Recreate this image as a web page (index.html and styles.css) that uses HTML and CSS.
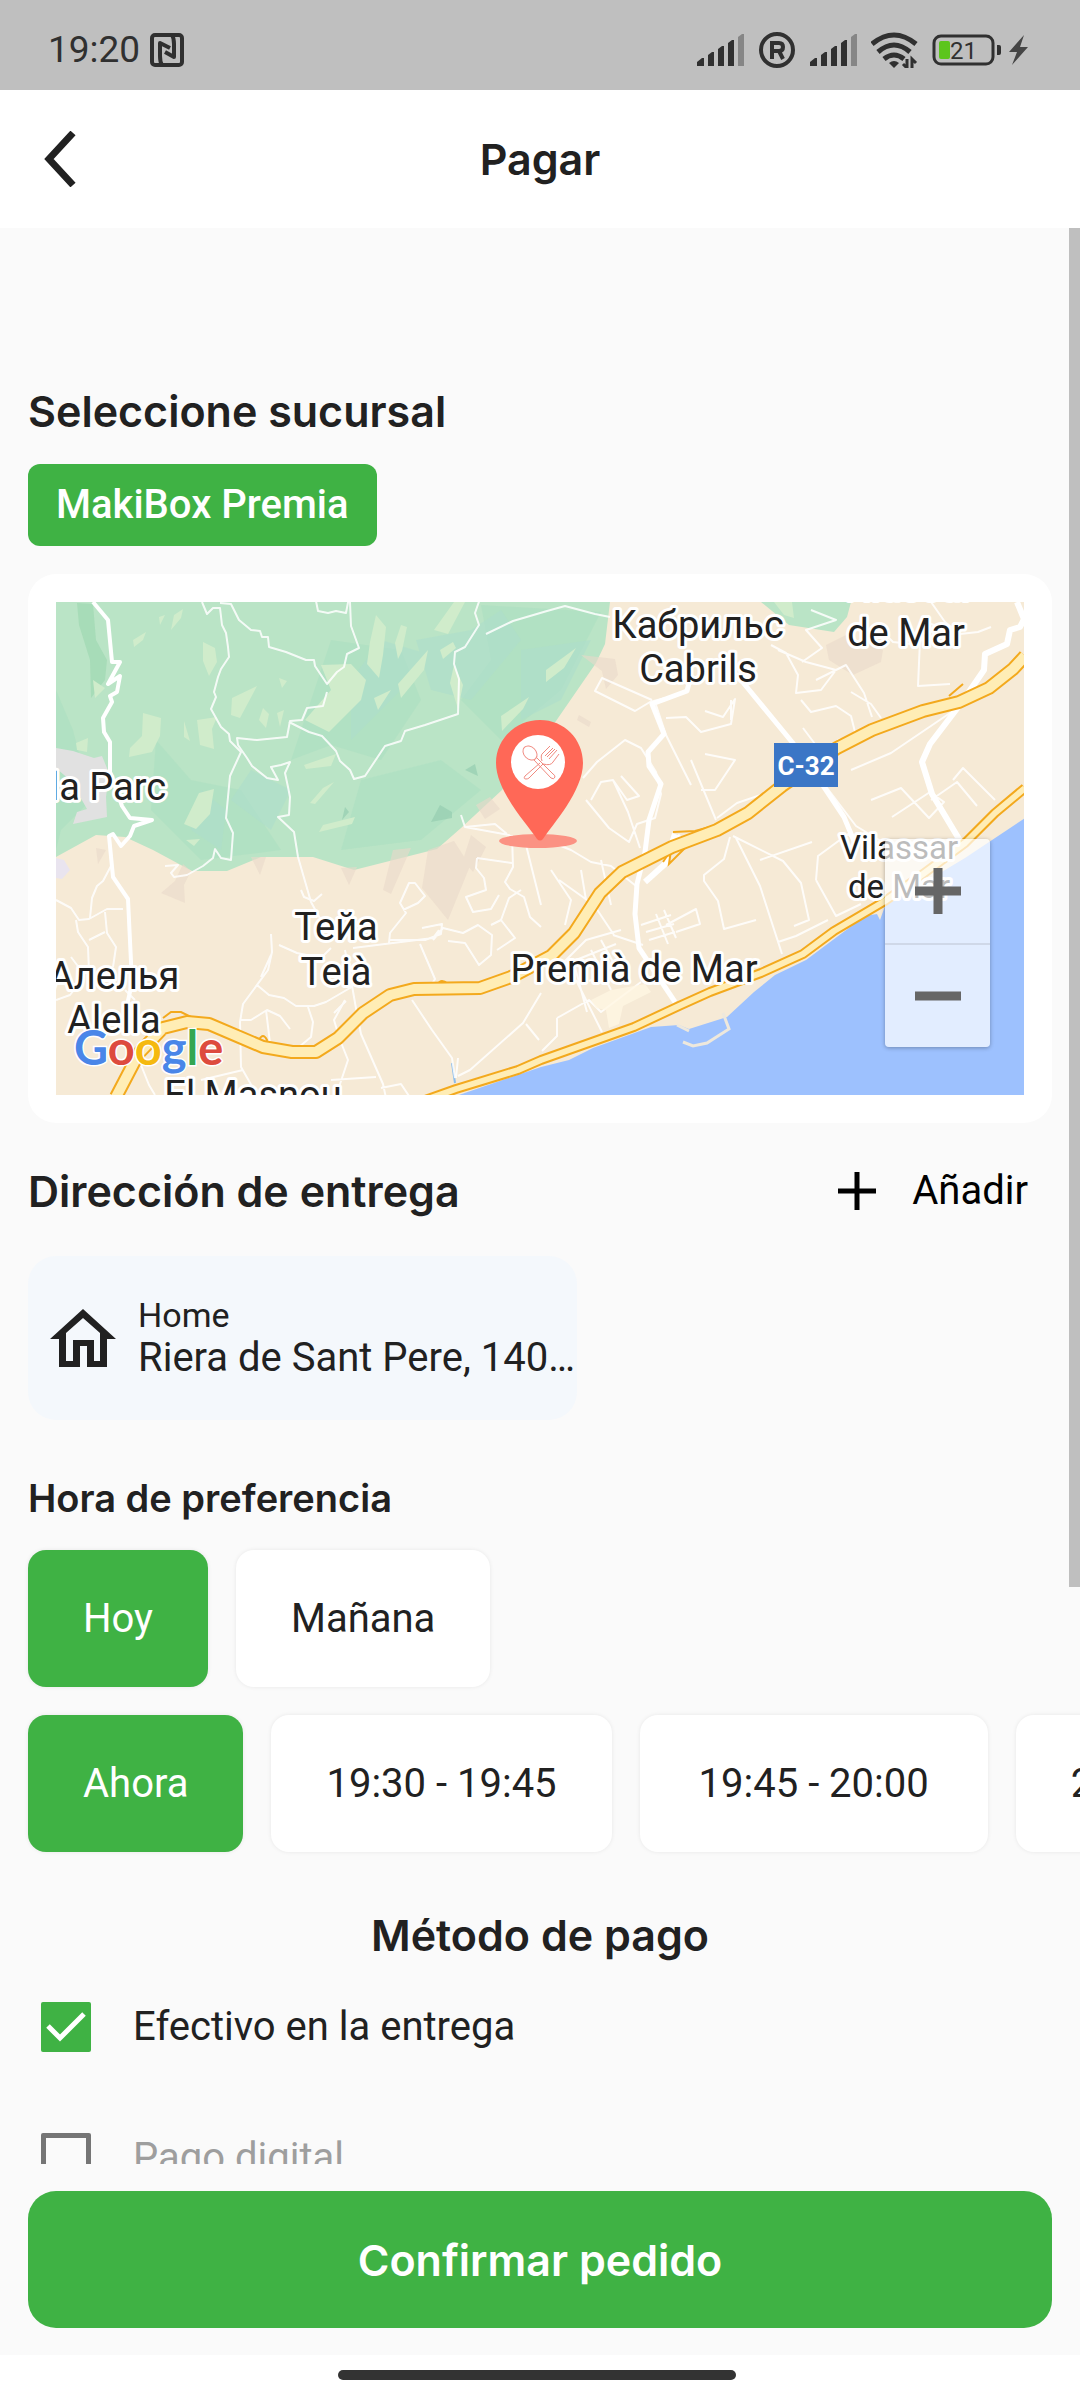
FILE: index.html
```html
<!DOCTYPE html>
<html lang="es">
<head>
<meta charset="utf-8">
<meta name="viewport" content="width=device-width, initial-scale=1">
<title>Pagar</title>
<link rel="stylesheet" href="styles.css">
</head>
<body>
<div class="statusbar">
  <div class="status-left">
    <span class="clock">19:20</span>
    <svg width="34" height="34" viewBox="0 0 34 34" fill="none" stroke="#303030" stroke-width="4" stroke-linejoin="round"><rect x="2" y="2" width="30" height="30" rx="3"/><path d="M12 32q-2-3-2-9V10l10 5M22 2q2 3 2 9v13l-9-5"/></svg>
  </div>
  <div class="status-right">
    <svg width="48" height="32" viewBox="0 0 48 32" fill="#303030"><path d="M0 32v-4l5-4h2v8zM11 32V21l4-3h2v14zM21 32V15l4-3h2v20zM31 32V9l4-3h2v26z"/><path fill="#868686" d="M41 32V3l4-3h2v32z"/></svg>
    <svg width="39" height="38" viewBox="0 0 39 38"><circle cx="19" cy="19" r="16" fill="none" stroke="#303030" stroke-width="4"/><path d="M14 28V12h7q4 0 4 4t-4 4h-6m6 0 4 8" fill="none" stroke="#303030" stroke-width="4"/></svg>
    <svg width="48" height="32" viewBox="0 0 48 32" fill="#303030"><path d="M0 32v-4l5-4h2v8zM11 32V21l4-3h2v14zM21 32V15l4-3h2v20zM31 32V9l4-3h2v26z"/><path fill="#868686" d="M41 32V3l4-3h2v32z"/></svg>
    <svg width="48" height="36" viewBox="0 0 48 36" fill="none" stroke="#303030" stroke-width="5"><path d="M1 12Q23-6 45 12M7 20q16-14 32 0M13 27q10-8 20 0"/><path d="M18 31q5-4 10 0l-5 5z" fill="#303030" stroke="none"/><path d="M36 27v9l-4-4M41 36v-9l4 4" stroke-width="3"/></svg>
    <svg width="70" height="32" viewBox="0 0 70 32"><rect x="2" y="2" width="59" height="28" rx="7" fill="none" stroke="#303030" stroke-width="3"/><rect x="7" y="7" width="11" height="18" rx="2" fill="#5cc51c"/><path fill="#303030" d="M65 11h2q2 0 2 2v6q0 2-2 2h-2z"/><text class="battery-text" x="18" y="25">21</text></svg>
    <svg class="bolt" width="19" height="30" viewBox="0 0 19 30" fill="#454545"><path d="M15 0 0 17h8L3 30l16-18h-8z"/></svg>
  </div>
</div>

<header class="appbar">
  <button class="back" type="button" aria-label="Atrás"><svg width="32" height="56" viewBox="0 0 32 56" fill="none" stroke="#212121" stroke-width="7"><path d="M29 2 5 28l24 26"/></svg></button>
  <h1 class="title">Pagar</h1>
</header>

<div class="viewport">
<main class="content">
  <h2 class="title">Seleccione sucursal</h2>
  <button class="chip" type="button">MakiBox Premia</button>

  <section class="map-card">
    <div class="map">
    <svg class="map-art" viewBox="55 602 968 493" role="img" aria-label="Mapa de Premià de Mar">
      <rect x="55" y="602" width="970" height="494" fill="#f6ead6"/>
      <!-- hills -->
      <path fill="#bae4c6" d="M55 602H609L604 644 595 663 555 721 501 790 460 828 436 849 353 870 312 857H260L226 871H191L152 850 124 837 95 835 55 857Z"/>
      <path fill="#bae4c6" d="M760 602 788 625 833 632 846 617 850 602Z"/>
      <path fill="#aee0c2" opacity=".7" d="M55 690 72 730 90 800 60 830 55 850ZM155 740 190 780 240 790 280 850 200 860 150 810ZM330 640 400 650 420 700 380 760 330 745 290 760 310 700ZM480 605 600 612 560 690 500 740 460 700 490 660ZM360 780 440 760 480 790 420 840 340 850Z"/>
      <path fill="#aeddcb" opacity=".6" d="M350 680 380 640 430 655 400 690 350 740ZM415 640 470 630 500 610 520 640 470 700 430 690ZM250 770 290 790 270 830 230 800ZM200 790 225 810 220 850 190 830ZM520 650 590 640 560 700 520 720Z"/>
      <path fill="#a3d9b4" opacity=".8" d="M76 603 92 604 95 640 106 660 104 680 90 698 89 660 78 625Z"/>
      <g fill="#d0eccb">
        <path d="M320 665 350 664 365 680 360 700 328 732 304 720 330 690ZM142 713l18 5-1 18-8 16-23 5 1-9 12-12ZM231 698l25-12-17 32-9-3ZM196 720l20-3-5 12 2 20-14-4ZM202 642l12 6 2 14-8 14-6-15ZM132 640l13-8-3 8-9 7ZM158 617l6-2-5 10ZM173 615l9-6-2 9-10 12ZM375 615l10 12-3 28-4 23-12-14 3-22ZM400 625l6 2-5 24-4 8-3-16ZM427 650l-4 20-23 28-3-14ZM433 630l20-28h11l-17 32ZM439 650l13-8 3 6-13 11ZM453 665l9 20-5 24-8-26ZM500 716l28-19-6 12-21 22ZM303 765l32-11-5 12-25 3ZM322 788l11-6-19 22-5-1ZM322 825l32-8-3 7-33 8ZM198 793l15-4-4 25-14 15-12-5ZM185 840l14-1-6 7ZM258 720l4-12 6 6-3 14ZM276 713l7-3-4 17ZM278 678l8 3-5 7ZM390 690l-13 20-4-12ZM75 743l12-5-1 14-10-2ZM183 721l6 20-6-4ZM92 680l12 8-10 10Z"/>
        <path d="M773 602h18l2 16-10-3ZM545 670l30-22-12 20-18 14Z"/>
      </g>
      <g fill="#96cdb0" opacity=".7"><path d="M430 822l9-17 12 7v6ZM464 770l10-6 3 12ZM344 807l4 5-7 8Z"/></g>
      <g fill="#ead9ca" opacity=".6">
        <path d="M160 893l14-12 8-17 8 7-7 14 1 18ZM250 857h15l-6 18ZM340 868l16-1-8 18ZM392 850l18-2-20 46-8-4ZM427 850l26-9 16 25-22 54-26-32ZM470 835l15 12-13 25-10-12ZM475 805l14-8 10 12-15 10ZM825 645 845 635 882 650 880 662 852 675 828 660ZM580 655l34 4 3 16-12 14-4-18ZM578 715l12 7-2 5-12-7ZM95 848l10 2-8 14Z"/>
      </g>
      <path fill="#e1e1e1" d="M55 748 72 751 93 758 101 756 108 773 105 797 106 817 72 824 76 812 86 809 70 781 55 768Z"/>
      <path fill="#e9e4ef" d="M55 858l8 2 6 10-8 9-6-1Z"/>
      <!-- sea -->
      <path fill="#9dc1fe" d="M1024 818 964 858 884 906 879 920 876 914 864 916 805 960 774 975 753 992 726 1017 688 1029 678 1025 650 1027 592 1048 568 1060 540 1067 455 1096H1024Z"/>
      <path d="M676 1025l12 6M682 1042l10 4 14-3 22-14-6-16" fill="none" stroke="#eee8dc" stroke-width="3"/>
      <path d="M451 1063l3 20" stroke="#8bbceb" stroke-width="2"/>
      <!-- minor roads, hills side -->
      <g class="trails">
        <path d="M201 602l5 12 6-6h7l2 17 4 8 2 14 1 10-8 12-3 8-4 15 2 5-5 12 10 18 8 7 1 7 11 11-11 24-4 42 7 15-2 27-10-2-6-9-2 9-10 8-16 9-13 2-3-4 7-8-13 1"/>
        <path d="M219 603l11 1 8 16 12 10 9 1 2 6 6 0 1 10 17 5 20 8 8 0 1 6 12 18 10-12 7-5 3-13 12-6-8-22-1-24 4-6-5 1-3 16-10-2-8 2-10-2-4-20-10-2-12 2-5-6"/>
        <path d="M326 692l-4 14-16 2-5 12-12 1-3 16-30 3-20-2 1 7 9 13 5 8 15 12 11 2-7-13 10-2 9-3-5 11 3 14 2 10-1 18-11 2 16 15 4 25 13 45 17 31"/>
        <path d="M288 722l20 10 13 4 14 15 4 10 10 9 4 9 11-3 20-30 16-5 4-10 20-6 24-8 9-3 1-35-5-15 1-12 10-5 14-22-4-12 7-20"/>
        <path d="M485 634l27-13 34-10 18-5 30 8 15 3M460 815l4 12 30-3 12 10M464 827l44 8 8 6M511 835l1 32-8 15 5 7 14 8 6 20 11 10M476 858l35 5M476 858l-1 10 8 10 2 12-20 7 7 15 18-3 8-14M525 845l15 60M300 890l3 7 10 4 8-7M55 900l15 8 8 12 10-1 18-10h16M75 920l2 12 10 15 1 25M104 912l2 21 9 14-3 20M110 866l-8 15-6 5-5 12-2 20M88 940l16-8M55 1000l14-5 12-15M124 990l10 10M70 957l9 12M270 934l1 18-4 18-25 34-3 18 1 45 16 28M278 945l18 8 24 5 10-10M270 955l-10 22M256 985l12 10 15 3 12 8 18 0 12-4 24-14 6-10M240 1020l10 0 16-10 13 6 10 13M265 1010l4 33 14 8 15-4 12-10 2-15-5-15M344 950l6 30 6 34 4 20 22 50 3 14M352 948l80-10 6-8M388 943l1-10 16-20-6-10 9-20h6l10 13-7 7-15 7M389 940l35 0 16-6 1-10-20 4M419 944l15 35-6 10M411 1000l20 30 20 28 3 20M344 1000l-11 20 6 20 8 20-10 30M333 1013l12-12M330 1080l45-3M200 1080l42-10M380 1088l20-4 8 12M457 1076l12-6 53-47 18-30M432 940l10-12 20 5 15-8 14 10-1 20-12 10-14-22-17-2M490 925l10-5 14 18-18 12M500 920l8-22 12-8M525 1024l13 16M455 1078l2-20M140 1065l8 20 6 10"/>
      </g>
      <!-- minor roads, coast side -->
      <g class="streets">
        <path d="M651 700l-50-22-7 13 40 20 15-9 15-4M655 705l10 30 10 20 15 30M665 718l20-1 15 15 30-8 4-25-12 18-18-6M730 700v20M582 778l14-16 28-22 16 8 15 24 5 22-6 24-18 6-8 18-20-14-23-28M590 800l10-18 12-2 14 20 12-4-18-20M612 780l15 32 12 36M700 790l14 0 20-30-30-6M690 760l25 60M716 818l20-15 35-12M735 838l24 48 22 68M729 837l-6 22-20 16 0 6 14 20 6 28 32-9M732 836l50 25 18 22 8 37-15 6M777 942l18-6 32-16M759 860l52-18M665 925l30-16 4 15-24 8M640 925l30-10M645 932l28-8M648 940l26-8M655 914l12 30M663 910l12 28M815 880l2-24 30-22 10 10M815 880l20 36 25-12M800 700l10 12 25-6 15 10 5 20-18 4 0 8-20 0-15-20M850 692l20 12 10 14M770 645l15 8 12 22-2 18 25-3 15-20-30-8-28-12M815 680l30-15 18 28 8 24M919 640l-2 46 32-2M810 610l25 10-30 10 16 18-20 14M880 630l12 12 18 2 20-20 12 4M930 602l14 20 15 12 18-2 13-5M850 770l40-17 62-42 25-20 46-35M870 800l30-12 28 30 15-16-14-10-38 25M820 780l35 46 33 20M952 780l10-12 32 32M930 800l26-18 20 24M780 790l-18 18-22 12M545 840l25 10 20 12 20 4 25 20M550 870l20 30-6 25M580 870l5 30M600 860l10 45M558 880l35 25 20 30M555 970l30-30 35-10M575 960l40-16M590 950l20 40M600 940l24 44M575 980l26 52M556 1018l32-18 12 12 40-30M556 1018v18l-15 15M572 960l14 52M612 935l30 10M628 966l-40 15"/>
      </g>
      <path fill="#fff6e2" opacity=".8" d="M590 1000l20-10 34-6 6 8-28 14-4 18-10 4-3-18-10-2Z"/>
      <!-- local roads -->
      <g class="locals">
        <path d="M92 602l15 18 4 42 8 0-12 22 12-8-3 16-7 4 2 6-9 16 1 14 6 10 0 30 12 34 8 12 22 2-18 6-4 10-9 10 -8-12-4 2 4 41 15 22 4 84-5 22 10 20" stroke-width="4"/>
        <path d="M690 675l-4 16-35 13 12 30-16 18 1 14 12 18-12 36-4 32-8 32-2 30 4 34 36 54" stroke-width="5"/>
        <path d="M740 680l51 62 22 30 30 45 10 24" stroke-width="5"/>
        <path d="M1016 602l7 17-4 8-10 3-3 14-22 10-1 16-22 32-32 42-8 18 10 32 30 50" stroke-width="6"/>
        <path d="M674 834l-10 30-20 18M665 850l15-14" stroke-width="6"/>
      </g>
      <!-- highways -->
      <path class="hw-edge thin" d="M424 1100 455 1089 517 1070 540 1060 633 1027 678 1006 709 992 760 973 802 954 833 931 884 901 922 874 964 843 994 813 1024 788"/>
      <path class="hw-fill thin" d="M424 1100 455 1089 517 1070 540 1060 633 1027 678 1006 709 992 760 973 802 954 833 931 884 901 922 874 964 843 994 813 1024 788"/>
      <path d="M162 1018l8-6h10l12 6M258 1040q4-8 8 0l-2 6M437 984q3-6 10 0M672 832l22-1 26-7M662 862l8-12-2 14 18-18M948 696l14-12" fill="none" stroke="#f3a91d" stroke-width="2"/>
      <path class="hw-edge" d="M115 1097 138 1053 162 1028 186 1022 208 1024 262 1047 291 1052 315 1052 337 1038 362 1013 389 995 413 989 479 988 510 977 550 956 573 933 599 893 621 872 671 847 716 830 747 813 781 786 836 748 871 730 922 711 958 702 988 688 1012 669 1024 656"/>
      <path class="hw-fill" d="M115 1097 138 1053 162 1028 186 1022 208 1024 262 1047 291 1052 315 1052 337 1038 362 1013 389 995 413 989 479 988 510 977 550 956 573 933 599 893 621 872 671 847 716 830 747 813 781 786 836 748 871 730 922 711 958 702 988 688 1012 669 1024 656"/>
      <rect x="773" y="743" width="64" height="44" fill="#3b76c6"/>
      <text class="shield" x="805" y="775">C-32</text>
      <!-- places -->
      <g class="places">
        <text x="697" y="638">Кабрильс</text>
        <text x="697" y="682">Cabrils</text>
        <text x="905" y="600">Vilassar</text>
        <text x="905" y="646">de Mar</text>
        <text x="107" y="800">la Parc</text>
        <text x="335" y="940">Тейа</text>
        <text x="335" y="985">Teià</text>
        <text x="633" y="982">Premià de Mar</text>
        <text x="113" y="989">Алелья</text>
        <text x="113" y="1033">Alella</text>
        <text x="252" y="1108">El Masnou</text>
        <g class="small"><text x="898" y="859">Vilassar</text><text x="898" y="898">de Mar</text></g>
      </g>
      <text class="google" x="73" y="1065"><tspan fill="#4a86e8">G</tspan><tspan fill="#dd4b3e">o</tspan><tspan fill="#f5b90f">o</tspan><tspan fill="#4a86e8">g</tspan><tspan fill="#34a652">l</tspan><tspan fill="#dd4b3e">e</tspan></text>
      <!-- marker -->
      <ellipse cx="537" cy="841" rx="39" ry="7" fill="#fb9283"/>
      <path fill="#ff6857" d="M539 720C563 720 582 739 582 763 582 791 552 824 542 839Q539 842 536 839C526 824 495 791 495 763 495 739 515 720 539 720Z"/>
      <circle cx="537" cy="762" r="27" fill="#fff"/>
      <g fill="none" stroke="#f08a80" stroke-width="1"><ellipse cx="529" cy="753" rx="6" ry="8" transform="rotate(-45 529 753)"/><path d="M533 760l17 18q3 2 4-1 0-2-2-3l-16-16M539 763l-15 13q-2 3 1 3 2 0 3-1l14-14M541 761q-2-6 1-8l7-7M542 764q8 2 10-2l6-8M544 756l8-8M546 757l8-8M548 759l8-9"/></g>
    </svg>
    <div class="zoom">
      <button type="button" aria-label="Acercar"><svg width="46" height="46" viewBox="0 0 46 46" stroke="#666" stroke-width="9"><path d="M0 23h46M23 0v46"/></svg></button>
      <button type="button" aria-label="Alejar"><svg width="46" height="46" viewBox="0 0 46 46" stroke="#666" stroke-width="9"><path d="M0 23h46"/></svg></button>
    </div>
    </div>
  </section>

  <div class="row-head">
    <h2 class="title">Dirección de entrega</h2>
    <button class="add" type="button"><svg width="38" height="38" viewBox="0 0 38 38" stroke="#000" stroke-width="5"><path d="M0 19h38M19 0v38"/></svg>Añadir</button>
  </div>

  <button class="address" type="button">
    <svg width="66" height="58" viewBox="0 0 66 58" fill="#212121" fill-rule="evenodd"><path d="M33 0 66 30H57V58H37V37H30V58H9V30H0ZM33 9 16 24V52H23V31H44V52H50V24Z"/></svg>
    <span class="address-text"><span class="address-name">Home</span><span class="address-line">Riera de Sant Pere, 140, Premià de Mar</span></span>
  </button>

  <h3 class="subtitle">Hora de preferencia</h3>
  <div class="slots">
    <button class="slot selected" type="button">Hoy</button>
    <button class="slot" type="button">Mañana</button>
  </div>
  <div class="slots">
    <button class="slot selected" type="button">Ahora</button>
    <button class="slot" type="button">19:30 - 19:45</button>
    <button class="slot wide" type="button">19:45 - 20:00</button>
    <button class="slot" type="button">20:00 - 20:15</button>
  </div>

  <h2 class="title payment-title">Método de pago</h2>
  <label class="option"><input type="checkbox" checked>Efectivo en la entrega</label>
  <label class="option muted"><input type="checkbox">Pago digital</label>
</main>
<div class="scroll-thumb"></div>
</div>

<footer class="footer"><button class="confirm" type="button">Confirmar pedido</button></footer>
<div class="navbar"><div class="handle"></div></div>
</body>
</html>
```
FILE: styles.css
```css
* { box-sizing: border-box; }
body {
  margin: 0;
  height: 100vh;
  display: flex;
  flex-direction: column;
  overflow: hidden;
  background: #fafafa;
  color: #212121;
  font-family: Roboto, "Liberation Sans", sans-serif;
  font-size: 40px;
}
svg { display: block; flex: none; }
button {
  margin: 0;
  padding: 0;
  border: 0;
  background: none;
  color: inherit;
  font: inherit;
}
h1, h2, h3 { margin: 0; }
.title, .subtitle, .confirm { font-family: Inter, Roboto, sans-serif; font-weight: 600; }
.title, .confirm { font-size: 43px; line-height: 52px; }

.statusbar {
  flex: none;
  display: flex;
  justify-content: space-between;
  align-items: center;
  height: 90px;
  padding: 9px 52px 0 48px;
  background: #bfbfbf;
  color: #303030;
}
.status-left { display: flex; align-items: center; gap: 10px; }
.status-right { display: flex; align-items: center; gap: 13px; }
.clock { font-size: 37px; line-height: 44px; }
.battery-text { font-size: 24px; fill: #303030; }
.bolt { margin-left: -6px; }

.appbar {
  flex: none;
  display: grid;
  grid-template-columns: 120px 1fr 120px;
  align-items: center;
  height: 138px;
  background: #fff;
  text-align: center;
}
.back { padding-left: 44px; }

.viewport { position: relative; flex: 1; min-height: 0; overflow: hidden; }
.content {
  display: flex;
  flex-direction: column;
  padding: 157px 28px 0;
}
.scroll-thumb {
  position: absolute;
  top: 0;
  right: 0;
  width: 11px;
  height: 1359px;
  background: #bfbfbf;
}

.chip {
  align-self: flex-start;
  margin-top: 27px;
  padding: 18px 28px;
  border-radius: 12px;
  background: #3fb244;
  color: #fff;
  font-weight: 500;
  line-height: 46px;
}

.map-card {
  margin-top: 28px;
  padding: 28px;
  border-radius: 28px;
  background: #fff;
}
.map { position: relative; }
.map-art { width: 100%; height: auto; }
.trails, .streets, .locals { fill: none; stroke: #fff; stroke-linejoin: round; }
.trails, .streets { stroke-width: 2; opacity: .85; }
.hw-edge, .hw-fill { fill: none; stroke-linejoin: round; }
.hw-edge { stroke: #f3a91d; stroke-width: 14; }
.hw-fill { stroke: #ffedb5; stroke-width: 10; }
.hw-edge.thin { stroke-width: 10; }
.hw-fill.thin { stroke-width: 6; }
.shield { font-size: 26px; font-weight: 700; fill: #fff; text-anchor: middle; }
.places {
  font-size: 38px;
  fill: #212121;
  stroke: #fff;
  stroke-width: 6px;
  stroke-linejoin: round;
  paint-order: stroke;
  text-anchor: middle;
}
.small { font-size: 33px; }
.google {
  font-family: Lato, sans-serif;
  font-size: 47px;
  font-weight: 700;
  stroke: #fff;
  stroke-width: 3px;
  paint-order: stroke;
}
.zoom {
  position: absolute;
  right: 34px;
  bottom: 48px;
  display: grid;
  width: 105px;
  border-radius: 4px;
  background: rgba(255, 255, 255, .7);
  box-shadow: 0 1px 4px rgba(0, 0, 0, .3);
}
.zoom button { display: grid; place-items: center; height: 104px; }
.zoom button + button { border-top: 2px solid #cfd8e8; }

.row-head {
  display: flex;
  justify-content: space-between;
  align-items: center;
  margin-top: 42px;
  padding-right: 24px;
}
.add { display: flex; align-items: center; gap: 36px; color: #000; line-height: 48px; }

.address {
  display: flex;
  align-items: center;
  gap: 22px;
  width: 549px;
  height: 164px;
  margin-top: 39px;
  padding-left: 22px;
  border-radius: 28px;
  background: #f4f8fc;
  text-align: left;
}
.address-text { display: flex; flex-direction: column; min-width: 0; }
.address-name { font-size: 34px; line-height: 40px; }
.address-line {
  overflow: hidden;
  line-height: 46px;
  text-overflow: ellipsis;
  white-space: nowrap;
}

.subtitle { margin-top: 54px; font-size: 38px; line-height: 48px; }
.slots { display: flex; gap: 28px; margin: 28px -28px 0 0; }
.slot {
  flex: none;
  height: 137px;
  padding: 0 55px;
  border-radius: 18px;
  background: #fff;
  box-shadow: 0 0 4px rgba(0, 0, 0, .08);
}
.slot.wide { padding: 0 59px; }
.slot.selected { background: #3fb244; color: #fff; }

.payment-title { margin-top: 57px; text-align: center; }
.option {
  display: flex;
  align-items: center;
  gap: 42px;
  height: 131px;
  padding-left: 13px;
}
.option.muted { color: #9e9e9e; }
.option input {
  flex: none;
  width: 50px;
  height: 50px;
  margin: 0;
  appearance: none;
  border: 5px solid #757575;
  border-radius: 2px;
}
.option input:checked {
  border: 0;
  background: #3fb244 url("data:image/svg+xml,%3Csvg xmlns='http://www.w3.org/2000/svg' viewBox='0 0 50 50' fill='none' stroke='white' stroke-width='5'%3E%3Cpath d='M7 24l12 12 24-24'/%3E%3C/svg%3E");
}

.footer { flex: none; padding: 27px 28px; }
.confirm {
  display: block;
  width: 100%;
  height: 137px;
  border-radius: 28px;
  background: #3fb244;
  color: #fff;
}
.navbar {
  flex: none;
  display: flex;
  justify-content: center;
  height: 45px;
  padding: 15px 6px 0 0;
  background: #fff;
}
.handle { width: 37%; height: 10px; border-radius: 5px; background: #333; }
```
